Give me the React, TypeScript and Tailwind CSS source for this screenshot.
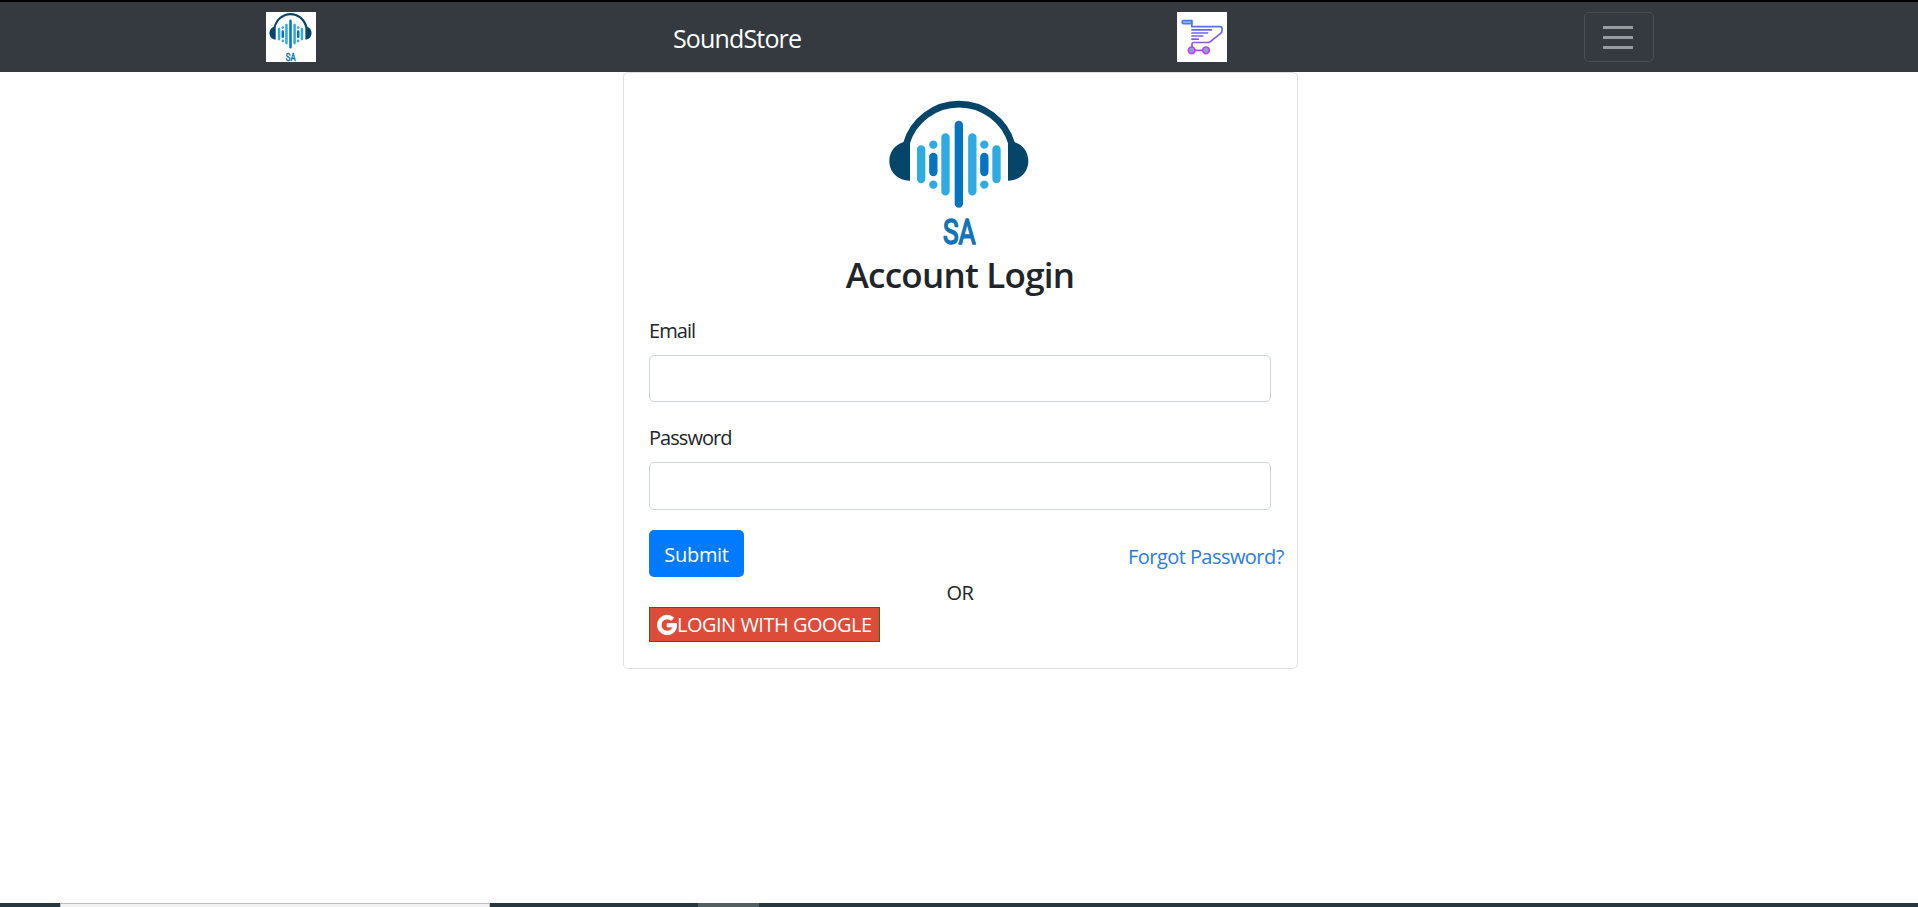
import { FaGoogle } from "react-icons/fa";

function BrandLogo({ className }: { className: string }) {
  return (
    <svg viewBox="54 39 495 450" preserveAspectRatio="none" overflow="visible" className={className}>
      <path d="M139 176A164.500 164.500 0 0 1 455 176" fill="none" stroke="#054569" strokeWidth="20" />
      <path
        d="M150 167V287C114 287 88 261 88 228C88 200 106 178 132 171ZM444 167V287C480 287 505 261 505 228C505 200 488 178 462 171Z"
        fill="#054569"
      />
      <g strokeLinecap="round" strokeWidth="25" fill="none">
        <path d="M183.500 193V282M256.500 157V319M337 157V319M409.500 193V282" stroke="#2fabe1" />
        <path d="M220 216V261M296.500 120V356M373 216V261" stroke="#0574c0" />
      </g>
      <g fill="#2fabe1">
        <circle cx="220" cy="179" r="12.500" />
        <circle cx="220" cy="299" r="12.500" />
        <circle cx="373" cy="179" r="12.500" />
        <circle cx="373" cy="299" r="12.500" />
      </g>
      <text
        x="249"
        y="477"
        textLength="98"
        lengthAdjust="spacingAndGlyphs"
        fill="#1173b8"
        stroke="#1173b8"
        strokeWidth="5"
        strokeLinejoin="round"
        className="font-['Roboto',sans-serif] text-[105px] font-normal"
      >
        SA
      </text>
    </svg>
  );
}

function CartLogo() {
  return (
    <svg viewBox="81 36 150 150" className="h-[50px] w-[50px] bg-white">
      <defs>
        <linearGradient id="cart" gradientUnits="userSpaceOnUse" x1="0" y1="60" x2="0" y2="162">
          <stop offset="0" stopColor="#3f7df0" />
          <stop offset="0.5" stopColor="#7a5cf0" />
          <stop offset="1" stopColor="#c63df2" />
        </linearGradient>
      </defs>
      <g fill="none" stroke="url(#cart)" strokeWidth="5" strokeLinejoin="round" strokeLinecap="round">
        <path d="M125 62H101a4.500 4.500 0 0 0 0 9H125Z" fill="#a9c4f5" />
        <path d="M125.500 62V80H211Q216 80 216 85V93Q216 97 212 100L181 125Q178 127.500 174 127.500H132Q126 127.500 126 133V141" />
        <path d="M126 89.500L184.500 89.600M126 99L173 99.100M126 108L158.500 108.100M126 117.500L145 117.600M135 151L158 151.100" />
        <circle cx="125" cy="151" r="10" fill="#8f9fd0" />
        <circle cx="168" cy="151" r="10" fill="#8f9fd0" />
      </g>
    </svg>
  );
}

function Field({ id, label, type, inputHeight }: { id: string; label: string; type: string; inputHeight: string }) {
  return (
    <div className="flex flex-col">
      <label htmlFor={id} className="mb-[9px] h-[30px] self-start text-[20px] leading-[30px] tracking-[-0.95px]">
        {label}
      </label>
      <input
        id={id}
        type={type}
        className={`${inputHeight} w-full rounded-[5px] border border-[#ced4da] bg-white px-[15px] text-[20px] outline-none`}
      />
    </div>
  );
}

export default function App() {
  return (
    <div className="flex h-[907px] w-full flex-col bg-white font-['Open_Sans','Noto_Sans',sans-serif] text-[#212529]">
      <header className="flex h-[72px] shrink-0 items-start border-t-2 border-black bg-[#343a40] pt-[10px] pl-[266px]">
        <BrandLogo className="h-[50px] w-[50px] bg-white" />
        <div className="ml-[357px] w-[504px] text-[25px] leading-[52px] tracking-[-0.85px] text-white">SoundStore</div>
        <CartLogo />
        <button className="ml-[357px] flex h-[50px] w-[70px] flex-col items-center justify-center gap-[7px] rounded-[5px] border border-[#484e53] pr-[2px]">
          <span className="h-[3px] w-[30px] bg-[#999c9f]" />
          <span className="h-[3px] w-[30px] bg-[#999c9f]" />
          <span className="h-[3px] w-[30px] bg-[#999c9f]" />
        </button>
      </header>

      <main className="flex grow flex-col">
        <section className="ml-[623px] h-[597px] w-[675px] rounded-[5px] border border-[#dfdfdf] pt-[25px] pr-[26px] pl-[25px]">
          <BrandLogo className="mx-auto h-[150px] w-[165px]" />
          <h1 className="h-[68px] pt-[6px] text-center text-[35px] leading-[42px] font-semibold tracking-[-0.75px]">
            Account Login
          </h1>
          <form className="flex flex-col gap-[21px]" onSubmit={(e) => e.preventDefault()}>
            <Field id="email" label="Email" type="email" inputHeight="h-[47px]" />
            <Field id="password" label="Password" type="password" inputHeight="h-[48px]" />
            <div className="mt-[-1px] flex h-[48px] items-start">
              <button className="h-[47px] w-[95px] shrink-0 rounded-[5px] bg-[#007bff] pt-[2px] text-[20px] tracking-[-0.3px] text-white">
                Submit
              </button>
              <a
                href="#"
                className="mt-[12px] ml-[384px] text-[20px] leading-[30px] tracking-[-0.55px] whitespace-nowrap text-[#2a7be4]"
              >
                Forgot Password?
              </a>
            </div>
          </form>
          <p className="mb-[-1px] text-center text-[20px] leading-[30px] tracking-[-0.5px]">OR</p>
          <button className="flex h-[35px] w-[231px] items-center border border-[#2b6b1a] bg-[#dd4b39] pl-[7px] text-[20px] text-white">
            <FaGoogle className="h-[20px] w-[20px] shrink-0 overflow-visible stroke-white stroke-[24px]" />
            <span className="pt-[1px] tracking-[-0.5px] whitespace-nowrap">LOGIN WITH GOOGLE</span>
          </button>
        </section>
      </main>

      <footer className="flex h-[4px] shrink-0 bg-[#27373f]">
        <div className="ml-[60px] w-[430px] border-x border-t border-[#bdbdbd] bg-[#f2f2f2]" />
        <div className="ml-[208px] w-[61px] bg-[#535e64]" />
      </footer>
    </div>
  );
}
